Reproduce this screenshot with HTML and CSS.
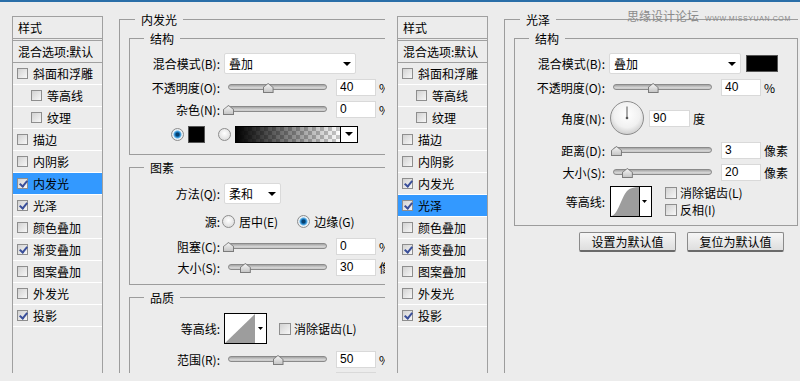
FILE: index.html
```html
<!DOCTYPE html>
<html lang="zh-CN">
<head>
  <meta charset="UTF-8">
  <meta name="viewport" content="width=device-width, initial-scale=1.0">
  <title>图层样式</title>
  <link rel="stylesheet" href="styles.css">
</head>
<body>

  <div class="topbar"></div>

  <div class="screen">

    <!-- 内发光 dialog -->
    <div class="dialog dialog-left">
      <div class="style-list">
        <div class="list-head">样式</div>
        <div class="list-blend">混合选项:默认</div>
        <div class="list-item"><span class="cb"></span>斜面和浮雕</div>
        <div class="list-item sub"><span class="cb"></span>等高线</div>
        <div class="list-item sub"><span class="cb"></span>纹理</div>
        <div class="list-item"><span class="cb"></span>描边</div>
        <div class="list-item"><span class="cb"></span>内阴影</div>
        <div class="list-item active"><span class="cb on"></span>内发光</div>
        <div class="list-item"><span class="cb on"></span>光泽</div>
        <div class="list-item"><span class="cb"></span>颜色叠加</div>
        <div class="list-item"><span class="cb on"></span>渐变叠加</div>
        <div class="list-item"><span class="cb"></span>图案叠加</div>
        <div class="list-item"><span class="cb"></span>外发光</div>
        <div class="list-item"><span class="cb on"></span>投影</div>
      </div>

      <div class="panel">
        <fieldset class="group">
          <legend>内发光</legend>

          <fieldset class="sub-group roomy">
            <legend>结构</legend>
            <div class="row row-select mt-6">
              <label class="label">混合模式(B):</label>
              <div class="select wide"><span>叠加</span><i class="caret"></i></div>
            </div>
            <div class="row">
              <label class="label">不透明度(O):</label>
              <div class="slider"><div class="track"></div><span class="thumb" style="left:40%"></span></div>
              <input class="field" type="text" value="40" readonly><span class="unit">%</span>
            </div>
            <div class="row">
              <label class="label">杂色(N):</label>
              <div class="slider"><div class="track"></div><span class="thumb" style="left:0%"></span></div>
              <input class="field" type="text" value="0" readonly><span class="unit">%</span>
            </div>
            <div class="row row-colors mt-7">
              <span class="radio on"></span>
              <span class="swatch"></span>
              <span class="radio second"></span>
              <div class="gradient"><div class="gradient-fill"></div><div class="drop"><i class="caret"></i></div></div>
            </div>
          </fieldset>

          <fieldset class="sub-group">
            <legend>图素</legend>
            <div class="row row-select mt-7">
              <label class="label">方法(Q):</label>
              <div class="select short"><span>柔和</span><i class="caret"></i></div>
            </div>
            <div class="row mt-8">
              <label class="label">源:</label>
              <span class="radio first"></span><span class="option">居中(E)</span>
              <span class="radio on"></span><span class="option">边缘(G)</span>
            </div>
            <div class="row mt-7">
              <label class="label">阻塞(C):</label>
              <div class="slider"><div class="track"></div><span class="thumb" style="left:0%"></span></div>
              <input class="field" type="text" value="0" readonly><span class="unit">%</span>
            </div>
            <div class="row mt-3">
              <label class="label">大小(S):</label>
              <div class="slider"><div class="track"></div><span class="thumb" style="left:17%"></span></div>
              <input class="field" type="text" value="30" readonly><span class="unit">像素</span>
            </div>
          </fieldset>

          <fieldset class="sub-group">
            <legend>品质</legend>
            <div class="row row-tall mt-7">
              <label class="label">等高线:</label>
              <svg class="contour" width="43" height="31" viewBox="0 0 43 31">
                <rect x="0.5" y="0.5" width="42" height="30" fill="#fff" stroke="#000"/>
                <polygon points="1,30 31,1 31,30" fill="#9d9d9d"/>
                <polygon points="34,14 39,14 36.5,17" fill="#000"/>
              </svg>
              <span class="check"><span class="cb big"></span>消除锯齿(L)</span>
            </div>
            <div class="row mt-6">
              <label class="label">范围(R):</label>
              <div class="slider"><div class="track"></div><span class="thumb" style="left:50%"></span></div>
              <input class="field" type="text" value="50" readonly><span class="unit">%</span>
            </div>
            <div class="row mt-3">
              <label class="label">抖动(J):</label>
              <div class="slider"><div class="track"></div><span class="thumb" style="left:0%"></span></div>
              <input class="field" type="text" value="0" readonly><span class="unit">%</span>
            </div>
          </fieldset>
        </fieldset>
      </div>
    </div>

    <!-- 光泽 dialog -->
    <div class="dialog dialog-right">
      <div class="style-list">
        <div class="list-head">样式</div>
        <div class="list-blend">混合选项:默认</div>
        <div class="list-item"><span class="cb"></span>斜面和浮雕</div>
        <div class="list-item sub"><span class="cb"></span>等高线</div>
        <div class="list-item sub"><span class="cb"></span>纹理</div>
        <div class="list-item"><span class="cb"></span>描边</div>
        <div class="list-item"><span class="cb"></span>内阴影</div>
        <div class="list-item"><span class="cb on"></span>内发光</div>
        <div class="list-item active"><span class="cb on"></span>光泽</div>
        <div class="list-item"><span class="cb"></span>颜色叠加</div>
        <div class="list-item"><span class="cb on"></span>渐变叠加</div>
        <div class="list-item"><span class="cb"></span>图案叠加</div>
        <div class="list-item"><span class="cb"></span>外发光</div>
        <div class="list-item"><span class="cb on"></span>投影</div>
      </div>

      <div class="panel">
        <fieldset class="group">
          <legend>光泽</legend>

          <fieldset class="sub-group closed">
            <legend>结构</legend>
            <div class="row row-select mt-6">
              <label class="label">混合模式(B):</label>
              <div class="select wide"><span>叠加</span><i class="caret"></i></div>
              <span class="swatch long"></span>
            </div>
            <div class="row">
              <label class="label">不透明度(O):</label>
              <div class="slider"><div class="track"></div><span class="thumb" style="left:40%"></span></div>
              <input class="field" type="text" value="40" readonly><span class="unit">%</span>
            </div>
            <div class="row row-dial mt-5">
              <label class="label">角度(N):</label>
              <svg class="dial" width="34" height="34" viewBox="0 0 34 34">
                <defs>
                  <radialGradient id="dialFill" cx="50%" cy="40%" r="60%">
                    <stop offset="0" stop-color="#ffffff"/>
                    <stop offset="0.65" stop-color="#f1f1f1"/>
                    <stop offset="1" stop-color="#cdcdcd"/>
                  </radialGradient>
                </defs>
                <circle cx="17" cy="17" r="16.5" fill="url(#dialFill)" stroke="#8c8c8c"/>
                <line x1="17" y1="17" x2="17" y2="5.5" stroke="#555"/>
                <circle cx="17" cy="17" r="1.3" fill="#555"/>
              </svg>
              <input class="field angle" type="text" value="90" readonly><span class="unit">度</span>
            </div>
            <div class="row mt-6">
              <label class="label">距离(D):</label>
              <div class="slider"><div class="track"></div><span class="thumb" style="left:3%"></span></div>
              <input class="field" type="text" value="3" readonly><span class="unit">像素</span>
            </div>
            <div class="row">
              <label class="label">大小(S):</label>
              <div class="slider"><div class="track"></div><span class="thumb" style="left:14%"></span></div>
              <input class="field" type="text" value="20" readonly><span class="unit">像素</span>
            </div>
            <div class="row row-tall mt-5">
              <label class="label">等高线:</label>
              <svg class="contour" width="42" height="31" viewBox="0 0 42 31">
                <rect x="0.5" y="0.5" width="41" height="30" fill="#fff" stroke="#000"/>
                <path d="M1 30 C8 29 11 12 17 5 C20 2 24 1 29 1 L29 30 Z" fill="#9d9d9d"/>
                <line x1="29.5" y1="1" x2="29.5" y2="30" stroke="#000"/>
                <polygon points="32,14 37,14 34.5,17" fill="#000"/>
              </svg>
              <div class="checks">
                <span class="check"><span class="cb big"></span>消除锯齿(L)</span>
                <span class="check"><span class="cb big"></span>反相(I)</span>
              </div>
            </div>
          </fieldset>

          <div class="buttons">
            <button class="button">设置为默认值</button>
            <button class="button">复位为默认值</button>
          </div>
        </fieldset>
      </div>

      <div class="watermark">思缘设计论坛<small>WWW.MISSYUAN.COM</small></div>
    </div>

  </div>

</body>
</html>
```

FILE: styles.css
```css
/* General */
body {
  margin: 0;
  background-color: #ececec;
  font-family: "Noto Sans CJK SC", "Liberation Sans", sans-serif;
  font-size: 12px;
  color: #000;
}

.topbar {
  height: 2px;
  background-color: #2a6ea8;
}

.screen {
  display: flex;
  height: 371px;
  overflow: hidden;
}

/* Dialogs */
.dialog {
  display: flex;
  align-items: flex-start;
  box-sizing: border-box;
  padding: 9px 0 0 12px;
  position: relative;
}

.dialog-left {
  width: 385px;
  flex-shrink: 0;
  overflow: hidden;
}

.dialog-right {
  flex: 1;
}

/* Style list */
.style-list {
  width: 91px;
  height: 400px;
  margin-top: 5px;
  flex-shrink: 0;
  box-sizing: border-box;
  border: 1px solid #a0a0a0;
  border-bottom: none;
  line-height: 21px;
  white-space: nowrap;
}

.list-head {
  height: 21px;
  padding-left: 5px;
  border-bottom: 1px solid #a0a0a0;
}

.list-blend {
  height: 21px;
  margin-top: 1px;
  padding-left: 5px;
  border-top: 1px solid #a0a0a0;
  border-bottom: 1px solid #a0a0a0;
}

.list-item {
  display: flex;
  align-items: center;
  height: 21px;
  padding-left: 4px;
  border-bottom: 1px solid #fff;
}

.list-item.sub {
  padding-left: 18px;
}

.list-item.active {
  background-color: #3399ff;
}

/* Checkboxes */
.cb {
  width: 11px;
  height: 11px;
  margin-right: 5px;
  flex-shrink: 0;
  box-sizing: border-box;
  border: 1px solid #8e8e8e;
  background: linear-gradient(135deg, #d2d2d2, #f7f7f7);
  position: relative;
}

.cb.big {
  width: 12px;
  height: 12px;
  margin-right: 3px;
}

.cb.on::after {
  content: "";
  position: absolute;
  left: 3px;
  top: 0;
  width: 3px;
  height: 6px;
  border-right: 2px solid #3a4f9a;
  border-bottom: 2px solid #3a4f9a;
  transform: rotate(40deg);
}

/* Group boxes */
fieldset {
  margin: 0;
  padding: 0;
  border: 0;
  min-width: 0;
}

legend {
  padding: 0 6px;
  line-height: 17px;
}

.panel {
  margin-left: 16px;
  flex-shrink: 0;
}

.dialog-left .panel {
  width: 300px;
}

.dialog-right .panel {
  flex: 1;
  padding-right: 2px;
}

.group {
  min-height: 380px;
  padding-left: 9px;
  border-top: 1px solid #9c9c9c;
  border-left: 1px solid #9c9c9c;
}

.group > legend {
  margin-left: 6px;
}

.sub-group {
  margin-top: 4px;
  padding-bottom: 8px;
  border: 1px solid #9c9c9c;
  border-right: none;
}

.sub-group:first-of-type {
  margin-top: 2px;
}

.sub-group.roomy {
  padding-bottom: 11px;
}

.sub-group.closed {
  border-right: 1px solid #9c9c9c;
}

.sub-group > legend {
  margin-left: 14px;
}

/* Rows */
.row {
  display: flex;
  align-items: center;
  height: 18px;
  margin-top: 4px;
  white-space: nowrap;
}

.row-select { height: 21px; }
.row-tall { height: 31px; }
.row-dial { height: 34px; }

.mt-3 { margin-top: 3px; }
.mt-5 { margin-top: 5px; }
.mt-6 { margin-top: 6px; }
.mt-7 { margin-top: 7px; }
.mt-8 { margin-top: 8px; }

.label {
  width: 90px;
  flex-shrink: 0;
  text-align: right;
}

/* Select boxes */
.select {
  display: flex;
  align-items: center;
  height: 21px;
  margin-left: 4px;
  padding-left: 4px;
  box-sizing: border-box;
  background-color: #fff;
  border: 1px solid #dadada;
  border-radius: 2px;
}

.select.wide { width: 132px; }
.select.short { width: 57px; }

.caret {
  width: 0;
  height: 0;
  border-left: 4px solid transparent;
  border-right: 4px solid transparent;
  border-top: 4px solid #000;
}

.select .caret {
  margin-left: auto;
  margin-right: 4px;
}

/* Sliders */
.slider {
  width: 99px;
  height: 18px;
  margin: 0 9px 0 8px;
  flex-shrink: 0;
  position: relative;
}

.track {
  height: 6px;
  margin-top: 6px;
  box-sizing: border-box;
  border: 1px solid #8a8a8a;
  border-radius: 3px;
  background: linear-gradient(#a4a4a4, #d8d8d8 70%, #c4c4c4);
}

.thumb {
  position: absolute;
  top: 5px;
  width: 11px;
  height: 10px;
  margin-left: -5px;
  background-color: #7b7b7b;
  clip-path: polygon(50% 0, 100% 45%, 100% 100%, 0 100%, 0 45%);
}

.thumb::after {
  content: "";
  position: absolute;
  inset: 1px;
  background: linear-gradient(#f4f4f4, #c6c6c6);
  clip-path: polygon(50% 0, 100% 45%, 100% 100%, 0 100%, 0 45%);
}

/* Number fields */
.field {
  width: 40px;
  height: 17px;
  margin: 0;
  padding: 0 0 0 3px;
  flex-shrink: 0;
  box-sizing: border-box;
  background-color: #fff;
  border: 1px solid #d9d9d9;
  font-family: "Liberation Sans", Arial, sans-serif;
  font-size: 12px;
  color: #000;
  outline: none;
}

.field.angle {
  width: 41px;
  margin-left: 5px;
}

.unit {
  margin-left: 3px;
}

/* Colours */
.row-colors {
  padding-left: 41px;
}

.radio {
  width: 13px;
  height: 13px;
  flex-shrink: 0;
  box-sizing: border-box;
  border: 1px solid #8d8d8d;
  border-radius: 50%;
  background: radial-gradient(circle at 50% 40%, #ffffff, #d4d4d4);
}

.radio.on {
  background: radial-gradient(circle, #06406e 0 1.5px, #1a7cc4 2.5px, #62b2e6 3.5px, #eef4f8 4.5px, #d6d6d6);
}

.radio.first { margin-left: 2px; }
.radio.second { margin-left: 13px; }

.option {
  margin: 0 19px 0 4px;
}

.swatch {
  width: 17px;
  height: 17px;
  margin-left: 4px;
  flex-shrink: 0;
  box-sizing: border-box;
  background-color: #000;
  border: 1px solid #555;
}

.swatch.long {
  width: 32px;
  margin-left: 5px;
}

.gradient {
  display: flex;
  width: 123px;
  height: 17px;
  margin-left: 4px;
  box-sizing: border-box;
  border: 1px solid #000;
}

.gradient-fill {
  flex: 1;
  background: linear-gradient(to right, #000, rgba(0, 0, 0, 0)),
    conic-gradient(#c8c8c8 25%, #fff 0 50%, #c8c8c8 0 75%, #fff 0) 0 0 / 8px 8px;
}

.drop {
  display: flex;
  align-items: center;
  justify-content: center;
  width: 16px;
  border-left: 1px solid #000;
  background-color: #fff;
}

/* Contour, dial, checks */
.contour {
  margin-left: 4px;
  flex-shrink: 0;
}

.dialog-right .contour {
  margin-left: 5px;
}

.dial {
  margin-left: 5px;
  flex-shrink: 0;
}

.check {
  display: flex;
  align-items: center;
  height: 17px;
  margin-left: 12px;
}

.checks {
  align-self: flex-start;
  margin-top: -2px;
  margin-left: 1px;
}

/* Buttons */
.buttons {
  display: flex;
  gap: 11px;
  margin-top: 6px;
  padding-left: 65px;
}

.button {
  width: 97px;
  height: 20px;
  padding: 0;
  box-sizing: border-box;
  border: 1px solid #8a8a8a;
  border-bottom: 2px solid #6a6a6a;
  border-radius: 2px;
  background: linear-gradient(#f6f6f6, #dedede);
  font-family: inherit;
  font-size: 12px;
  line-height: 16px;
  color: #000;
}

/* Watermark */
.watermark {
  position: absolute;
  top: 6px;
  left: 242px;
  display: flex;
  align-items: baseline;
  color: #8a8a8a;
  font-size: 12px;
  line-height: 16px;
  white-space: nowrap;
}

.watermark small {
  margin-left: 6px;
  font-family: "Liberation Sans", Arial, sans-serif;
  font-size: 7px;
  letter-spacing: 0.6px;
}
```
